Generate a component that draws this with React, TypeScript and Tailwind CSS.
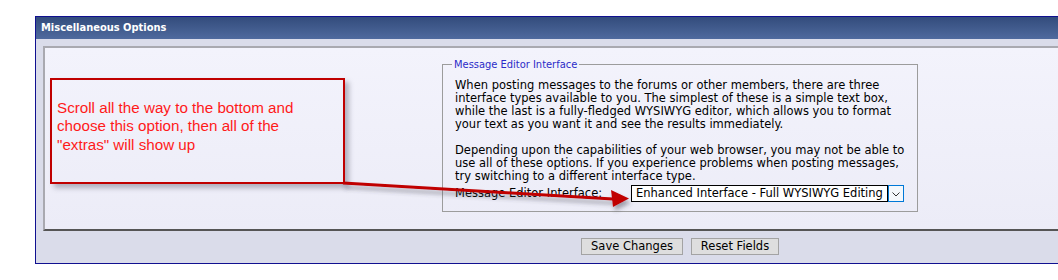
import React from "react";

const verdana = { fontFamily: '"DejaVu Sans", Verdana, sans-serif' };

const helpLines = [
  "When posting messages to the forums or other members, there are three",
  "interface types available to you. The simplest of these is a simple text box,",
  "while the last is a fully-fledged WYSIWYG editor, which allows you to format",
  "your text as you want it and see the results immediately.",
];

const browserLines = [
  "Depending upon the capabilities of your web browser, you may not be able to",
  "use all of these options. If you experience problems when posting messages,",
  "try switching to a different interface type.",
];

const EditorSelect: React.FC = () => (
  <div className="flex h-[17px] w-[273px] bg-white">
    <div className="flex-1 border border-black pl-[4px] text-[11.5px] leading-[15px] text-black whitespace-nowrap overflow-hidden">
      Enhanced Interface - Full WYSIWYG Editing
    </div>
    <div className="flex w-[16px] items-center justify-center border border-[#0078d7] bg-[#f4f8fc]">
      <svg width="8" height="5" viewBox="0 0 8 5" className="mt-[2px]">
        <path d="M0.5 0.5 L4 4 L7.5 0.5" fill="none" stroke="#333" strokeWidth="1" />
      </svg>
    </div>
  </div>
);

export default function App() {
  return (
    <div className="relative h-[280px] w-[1058px] overflow-hidden bg-white" style={verdana}>
      <div className="ml-[35px] mt-[16px] w-[1290px] border border-[#101090] bg-[#dadcea]">
        <div
          className="h-[22px] bg-gradient-to-b from-[#334c7c] to-[#4f6a9e] pl-[5px] text-[11px] font-bold leading-[22px] text-white"
          style={{ fontFamily: '"DejaVu Sans Condensed", Tahoma, sans-serif' }}
        >
          Miscellaneous Options
        </div>

        <div className="mx-[7px] mt-[7px] border-t-2 border-l-2 border-b-2 border-r-2 border-t-[#a9a9b0] border-l-[#a9a9b0] border-b-[#555555] border-r-[#e6e6ee] bg-gradient-to-b from-[#f3f3fc] to-[#ececf7]">
          <div className="h-[181px] pt-[10px]">
            <fieldset className="mx-auto w-[476px] border border-[#9c9c9c] pl-[12px] pr-[12px] pb-[9px] text-[11.5px] leading-[13px] text-black">
              <legend
                className="ml-[-3px] px-[2px] text-[11px] leading-[13px] text-[#2b2bc8]"
                style={{ fontFamily: '"DejaVu Sans Condensed", Tahoma, sans-serif' }}
              >
                Message Editor Interface
              </legend>
              <div className="mt-[8px] whitespace-nowrap">
                {helpLines.map((l) => (
                  <div key={l}>{l}</div>
                ))}
              </div>
              <div className="mt-[13px] whitespace-nowrap">
                {browserLines.map((l) => (
                  <div key={l}>{l}</div>
                ))}
              </div>
              <div className="mt-[2px] flex items-center">
                <span className="w-[176px] whitespace-nowrap">Message Editor Interface:</span>
                <EditorSelect />
              </div>
            </fieldset>
          </div>
        </div>

        <div className="flex h-[32px] items-start justify-center gap-[8px] pt-[7px]">
          <button className="h-[17px] w-[102px] border border-[#a3a3a3] bg-[#dedede] text-[11.5px] leading-[15px] text-black">
            Save Changes
          </button>
          <button className="h-[17px] w-[88px] border border-[#a3a3a3] bg-[#dedede] text-[11.5px] leading-[15px] text-black">
            Reset Fields
          </button>
        </div>
      </div>

      {/* annotation callout */}
      <div
        className="absolute left-[50px] top-[78px] h-[106px] w-[295px] border-2 border-[#c00000] pl-[5px] pt-[19px] text-[15.2px] leading-[18.4px] text-[#ff1a1a] shadow-[4px_4px_5px_rgba(60,60,80,0.35)]"
        style={{ fontFamily: '"Liberation Sans", Arial, sans-serif' }}
      >
        Scroll all the way to the bottom and
        <br />
        choose this option, then all of the
        <br />
        "extras" will show up
      </div>

      <svg className="pointer-events-none absolute left-0 top-0" width="1058" height="280">
        <defs>
          <filter id="arrowShadow" x="-10%" y="-50%" width="120%" height="300%">
            <feDropShadow dx="2" dy="4" stdDeviation="2" floodColor="#404050" floodOpacity="0.45" />
          </filter>
        </defs>
        <g filter="url(#arrowShadow)">
          <path d="M343 183 Q360 184 613 199" fill="none" stroke="#c00000" strokeWidth="3" />
          <polygon points="611,190 629,198.5 613,207" fill="#c00000" />
        </g>
      </svg>
    </div>
  );
}
